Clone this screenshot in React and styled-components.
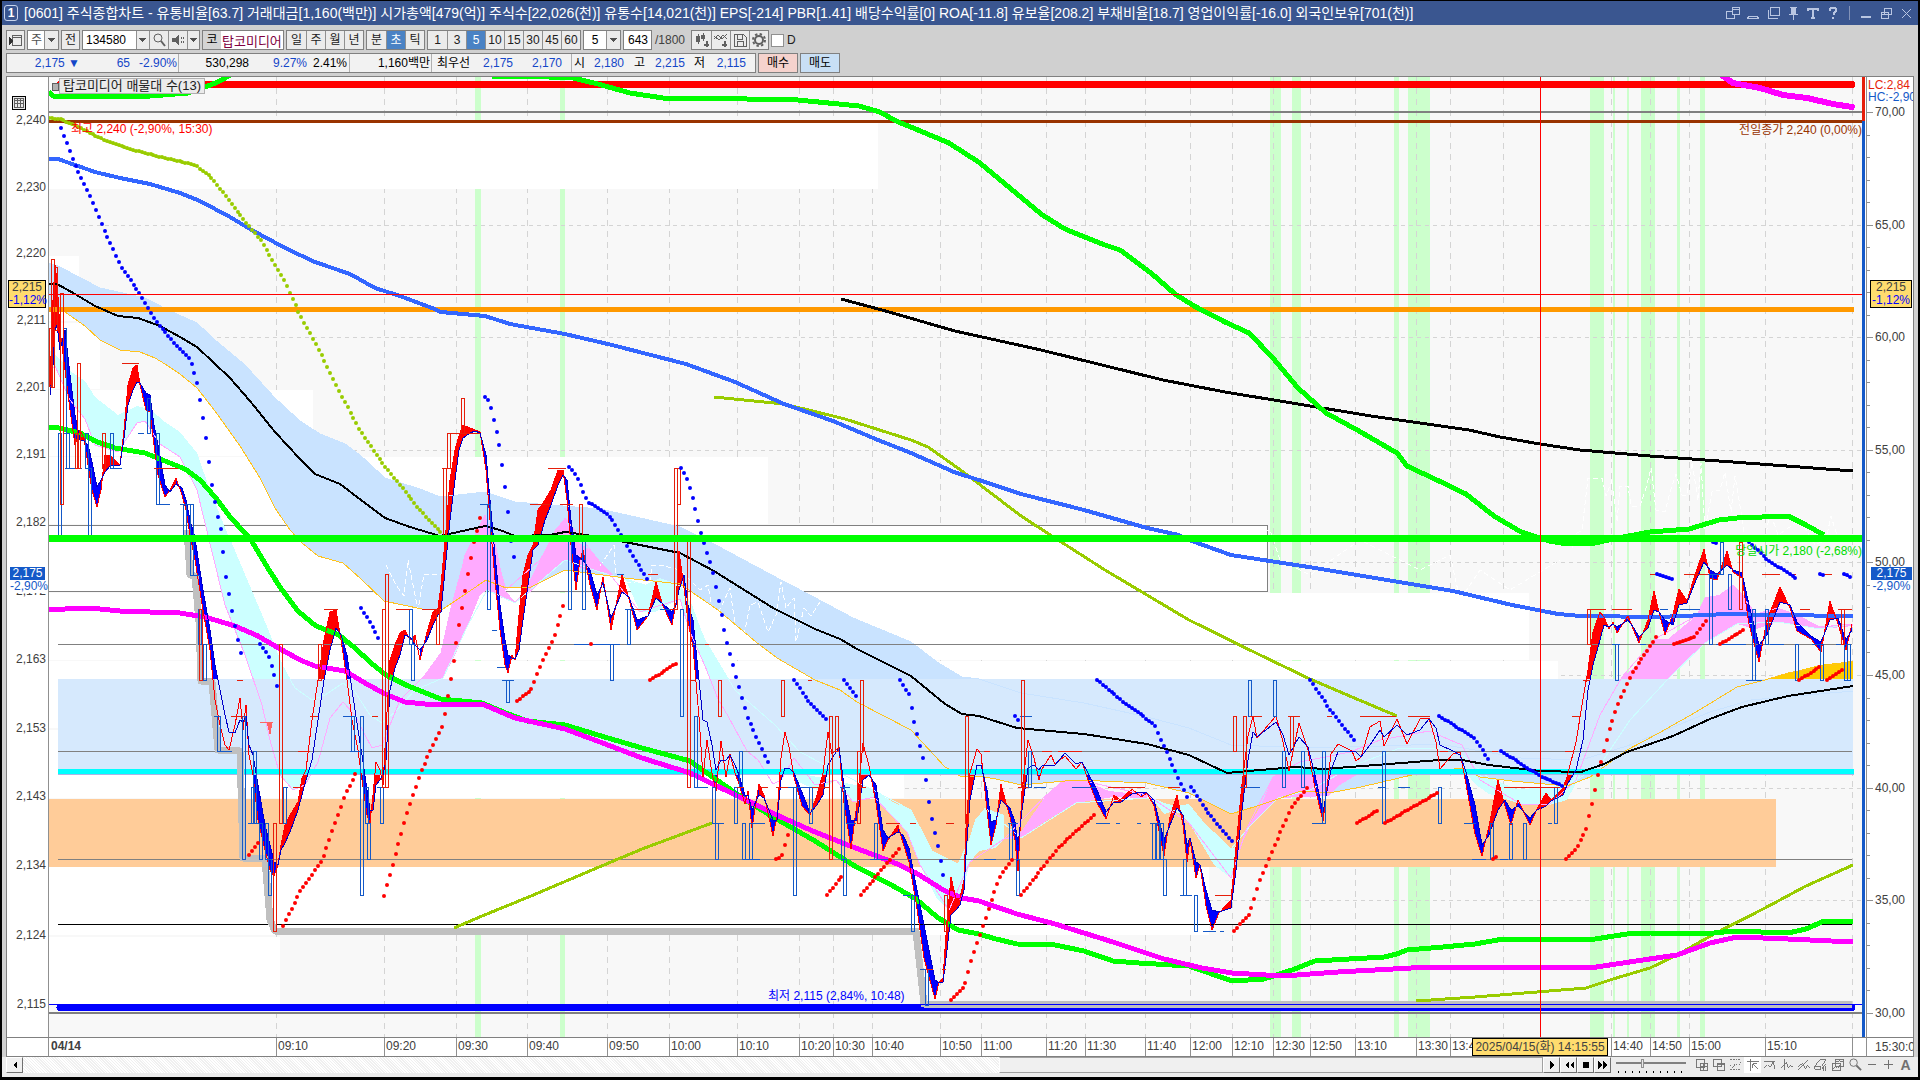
import React from "react";
import styled, {createGlobalStyle} from "styled-components";

const GlobalStyle = createGlobalStyle`
    * {
        box-sizing: border-box;
    }

    body {
        margin: 0;
        background: #000000;
        color: #000000;
        font-family: "Liberation Sans", "Noto Sans CJK KR", sans-serif;
        font-size: 12px;
        line-height: 16px;
    }

    button, input, select {
        font: inherit;
        color: inherit;
        margin: 0;
        padding: 0;
        border-radius: 0;
    }
`;

/* ---------- chart data (plot units) ---------- */

const PLOT = {x: 49, y: 77, w: 1817, h: 960};

const bands = [[475, 6], [560, 5], [1270, 11], [1292, 9], [1394, 5], [1408, 22], [1590, 14], [1613, 2], [1627, 2], [1641, 14], [1677, 3], [1700, 5]];

const gridX = [276, 384, 456, 527, 607, 669, 737, 799, 833, 872, 940, 981, 1046, 1085, 1145, 1190, 1232, 1273, 1310, 1355, 1416, 1450, 1503, 1611, 1650, 1689, 1765, 1852];
const gridY = [225, 337, 450, 562, 675, 788, 900];

// volume profile rows: x end, y start, y end
const profile = [[878, 123, 189], [79, 256, 321], [100, 323, 389], [313, 390, 456], [768, 457, 524], [1268, 525, 592], [1529, 593, 660], [1558, 661, 728], [904, 730, 798], [1209, 867, 935], [280, 937, 1004]];

const cloudTop = "49,263 58,266 100,288 145,298 170,311 197,323 215,340 245,365 275,398 300,421 320,434 345,444 360,455 385,478 420,489 440,497 485,492 515,502 550,505 600,509 640,518 680,527 714,544 781,580 810,595 853,618 911,642 937,662 962,677 979,679 1021,693 1084,703 1147,717 1189,728 1231,745 1315,748 1384,746 1439,744 1475,750 1521,758 1581,760 1627,746 1710,712 1751,700 1853,691";
const cloudBottom = "49,308 65,312 85,326 100,340 120,350 140,352 155,358 165,364 180,374 197,388 215,411 240,446 260,478 275,508 290,530 302,543 318,556 343,563 361,579 384,601 422,609 443,609 461,597 486,580 506,588 531,587 565,570 588,573 625,578 680,584 718,610 756,642 777,658 815,680 840,690 857,702 911,730 945,767 962,777 979,776 996,779 1021,785 1076,780 1147,783 1189,793 1231,814 1257,806 1269,802 1301,791 1329,793 1361,787 1416,774 1462,768 1480,777 1512,781 1567,786 1590,777 1627,750 1659,733 1696,712 1737,687 1765,680 1788,673 1853,661";

const cyanClouds = [
    "49,350 57,356 70,371 85,381 95,397 118,415 137,406 150,409 165,422 180,432 197,453 210,490 230,540 245,575 265,623 282,665 295,688 312,700 325,695 343,683 343,702 330,718 318,762 305,785 293,790 280,775 270,740 262,705 245,655 225,605 212,552 197,490 180,457 160,444 145,421 137,423 118,452 95,445 85,419 70,400 55,366 49,371",
    "625,578 645,585 660,578 680,585 692,605 705,640 720,665 735,690 735,740 718,699 705,666 690,632 680,599 655,612 640,612",
    "794,772 869,788 895,803 911,810 932,851 958,864 966,850 975,820 985,808 1004,815 1004,839 996,848 979,851 970,862 962,895 949,910 937,899 920,865 907,832 890,815 874,797 853,802 836,780 819,791 794,780",
    "1151,797 1164,803 1177,806 1189,804 1206,825 1231,849 1238,845 1236,866 1231,878 1214,865 1206,851 1189,823 1177,810 1164,814",
    "1462,768 1517,790 1567,786 1576,774 1583,770 1567,800 1549,805 1521,804 1489,794 1475,784",
];
const pinkClouds = [
    "395,705 410,690 425,675 440,655 450,610 465,555 478,530 485,515 495,540 505,590 515,602 525,590 540,560 555,530 565,518 575,540 590,550 600,562 615,577 600,572 580,568 565,560 550,573 530,592 515,603 500,597 487,590 480,595 468,625 455,655 443,678 415,700",
    "1004,839 1021,832 1046,795 1063,780 1084,781 1097,786 1109,791 1147,795 1147,798 1113,797 1076,803 1046,821 1021,838",
    "1236,857 1246,830 1260,807 1273,777 1285,770 1365,770 1338,786 1328,796 1278,798 1250,826",
    "1622,677 1636,666 1655,639 1668,639 1696,616 1705,597 1719,595 1733,585 1742,593 1756,614 1778,608 1797,614 1820,627 1853,624 1853,626 1820,629 1778,622 1756,629 1737,624 1705,643 1687,660 1668,679 1650,700 1600,760",
];
const cyanLine = "230,540 265,623 282,665 295,688 312,700 325,695 343,683 355,692 370,715 382,723 395,712 415,690 443,678 468,625 487,590 515,603 565,560 600,572 645,585 680,585 705,640 735,690 775,725 800,752 869,788 911,810 932,851 958,864 985,808 1021,838 1076,803 1147,798 1206,825 1231,849 1250,826 1278,798 1310,790 1355,765 1400,748 1439,748 1462,755 1489,778 1517,790 1567,786 1600,765 1630,720 1668,679 1705,643 1737,624 1778,622 1820,629 1853,624";
const pinkLine = "49,371 55,366 70,400 85,419 95,445 118,452 137,423 145,421 160,444 180,457 197,490 212,552 225,605 245,655 262,705 270,740 280,775 293,790 305,785 318,762 330,718 343,702 355,715 365,735 372,748 382,745 400,700 425,675 443,650 465,555 485,515 506,590 540,560 565,518 600,562 640,612 680,599 690,632 705,666 718,699 728,716 747,751 758,760 773,784 781,780 794,758 815,785 836,780 853,802 874,797 907,832 920,865 949,910 970,862 1004,839 1046,795 1084,781 1147,795 1189,823 1231,878 1246,830 1273,777 1300,762 1350,752 1380,740 1429,731 1462,745 1480,780 1521,804 1549,805 1576,780 1600,715 1622,677 1655,639 1696,616 1733,585 1756,614 1778,608 1820,627 1853,624";

const curves = [
    {c: "#c0c0c0", w: 7, p: "187,530 190,575 195,576 199,622 201,681 212,682 218,750 240,751 243,858 265,859 270,920 275,931 916,931 920,968 924,1004 1852,1004"},
    {c: "#000000", w: 2, p: "49,284 57,284 75,294 95,306 118,316 138,318 160,326 180,337 197,347 230,378 250,401 275,432 300,459 315,474 340,484 365,503 385,518 410,527 440,536 485,526 500,530 515,536 550,535 565,532 580,534 620,541 680,553 714,571 773,608 815,629 840,639 857,649 911,676 945,704 962,714 979,716 1017,728 1084,734 1147,744 1189,755 1227,773 1260,770 1296,767 1324,769 1402,763 1439,760 1462,760 1489,765 1540,771 1581,772 1604,764 1627,752 1673,736 1710,719 1742,707 1788,696 1853,686"},
    {c: "#000000", w: 3, p: "841,299 882,310 955,331 1041,350 1163,380 1225,392 1298,404 1371,416 1469,430 1500,437 1540,444 1580,450 1650,456 1733,462 1853,471"},
    {c: "#99cc00", w: 3, p: "714,397 784,404 845,419 911,440 928,447 962,471 1021,516 1055,538 1105,570 1189,620 1260,655 1310,679 1352,697 1397,716"},
    {c: "#99cc00", w: 3, p: "454,928 482,916 531,896 592,870 642,849 712,823"},
    {c: "#99cc00", w: 3, p: "1416,1001 1475,997 1586,988 1613,979 1650,968 1677,955 1714,934 1765,908 1806,886 1853,865"},
    {c: "#3366ff", w: 4, p: "49,159 58,159 95,172 120,178 150,184 180,193 200,201 230,217 250,229 285,248 315,262 350,274 375,288 400,296 432,308 441,312 485,316 510,324 565,334 612,345 686,364 735,382 784,404 833,421 878,440 911,453 954,472 991,484 1021,494 1084,510 1147,528 1179,535 1189,540 1231,555 1315,568 1453,591 1512,605 1558,614 1581,616 1659,617 1728,614 1774,615 1853,616"},
    {c: "#00ff00", w: 5, p: "49,92 53,96 150,96 188,93 205,87 218,82 230,75"},
    {c: "#00ff00", w: 5, p: "492,76 524,76 573,78 598,84 630,93 663,98 696,98 798,100 859,106 880,112 896,121 918,130 949,143 980,163 1016,193 1041,214 1065,229 1102,244 1120,250 1151,273 1175,294 1194,306 1225,322 1249,333 1273,358 1298,388 1326,413 1359,431 1397,453 1407,466 1439,481 1466,494 1494,516 1521,532 1549,541 1567,544 1595,543 1618,538 1650,532 1689,529 1719,520 1737,518 1788,516 1806,525 1824,535"},
    {c: "#00ff00", w: 5, p: "49,428 55,427 80,433 95,441 115,448 145,453 165,461 185,469 200,480 215,497 230,517 245,533 251,540 269,570 282,590 298,611 316,626 339,635 355,648 371,663 386,675 408,686 441,699 482,703 506,713 527,721 565,725 608,738 642,748 690,761 714,778 747,801 773,817 815,841 853,865 895,887 916,899 937,917 958,930 979,934 996,939 1017,944 1055,945 1084,951 1113,961 1139,963 1189,966 1232,981 1264,979 1292,970 1315,961 1384,957 1397,954 1407,950 1443,947 1475,944 1503,939 1595,939 1627,934 1650,933 1705,934 1733,931 1788,933 1806,929 1824,921 1853,921"},
    {c: "#ff00ff", w: 5, p: "49,610 65,609 90,608 120,611 180,613 205,617 235,626 258,636 275,646 300,660 315,666 345,671 365,683 385,694 405,702 425,704 482,704 515,718 565,729 600,742 642,758 690,773 752,803 781,817 815,832 853,847 895,863 916,873 945,891 962,898 979,901 1017,914 1055,924 1113,942 1164,959 1202,968 1232,973 1283,976 1338,972 1430,967 1512,967 1590,968 1636,961 1677,955 1710,943 1737,937 1788,939 1853,942"},
];

const blueRuns = [
    "61,128 75,165 90,196 105,232 122,268 140,294 155,320 175,344 190,359 197,381 202,410 207,445 211,480 216,510 221,531 226,575 232,611 238,640 243,663",
    "260,644 268,655 274,673 278,688",
    "361,608 370,622 381,643",
    "485,397 489,401 495,425 499,442 502,462 507,500 511,540 516,568",
    "569,467 576,475 588,502 600,509 611,518 619,531 632,555 648,580",
    "681,468 686,476 693,499 701,532 712,569 718,597 726,638 737,680 747,716 758,740 770,767",
    "794,680 810,703 826,719",
    "844,680 858,699",
    "900,680 909,695 916,729 923,756 930,810 937,843 945,883",
    "1015,716 1018,720",
    "1097,680 1126,704 1154,724 1164,747 1173,766 1187,797",
    "1191,787 1206,810 1233,843",
    "1310,680 1329,708 1355,742",
    "1439,716 1473,737 1490,761",
    "1501,751 1540,776 1563,786",
    "1657,574 1673,580",
    "1713,542 1717,544",
    "1749,542 1769,561 1796,578",
    "1820,574 1824,575",
    "1844,574 1850,577",
];

const redRuns = [
    "249,855 258,843",
    "283,926 300,892 322,860 335,824 345,795 358,769",
    "384,896 392,867 408,810 422,769 443,725 451,677 461,615 473,546 477,530 482,508",
    "517,701 531,690 543,660 553,640 566,598",
    "591,644 592,644",
    "650,680 677,663",
    "776,859 781,858 788,834",
    "827,895 842,876",
    "861,895 899,849",
    "951,1000 965,985 972,958 981,932 991,902 1000,877 1012,860",
    "1021,895 1059,847 1095,814",
    "1234,931 1250,913 1260,880 1276,842 1292,807 1308,786",
    "1357,823 1380,809",
    "1385,823 1439,792",
    "1493,859 1498,855",
    "1566,859 1576,849 1586,830 1593,800 1600,765 1609,731 1618,704 1632,673 1645,654 1656,637",
    "1674,644 1694,637 1706,621",
    "1720,644 1745,629",
    "1799,680 1820,667",
    "1827,680 1842,670",
];

const oliveRun = "49,118 60,119 75,125 100,138 130,149 160,157 195,165 210,176 225,195 240,215 262,242 283,278 300,315 320,352 340,393 360,430 380,460 400,485 420,510 441,533";

// x, fast average, slow average
const averages = "50,385,395 53,300,365 55,265,330 57,280,325 60,330,350 65,370,330 70,410,375 75,445,415 80,430,440 84,438,441 88,465,445 92,490,462 97,507,487 101,490,480 105,455,472 110,455,466 120,465,465 124,430,438 128,385,405 133,368,390 137,365,382 140,385,383 146,410,393 150,412,395 154,445,425 158,475,445 165,497,485 170,490,492 176,478,484 182,495,488 186,510,500 190,535,520 195,560,538 203,610,590 210,650,630 215,700,665 220,725,690 225,745,715 229,750,732 235,725,733 240,698,720 243,730,722 246,705,716 249,755,745 253,775,755 258,820,785 265,850,825 270,870,845 274,876,862 278,865,865 281,845,850 285,825,843 290,815,832 298,802,810 302,778,795 306,770,780 312,720,760 318,680,720 324,640,680 330,612,650 336,610,628 341,640,635 347,680,655 352,720,690 358,750,730 362,780,755 367,815,790 370,823,810 373,795,810 376,762,785 380,770,780 383,785,775 386,730,760 390,660,690 395,645,668 400,633,655 405,630,635 410,640,637 415,635,645 420,660,650 427,632,640 433,612,625 438,608,615 441,585,612 446,530,560 450,480,520 455,450,480 459,436,450 463,425,438 470,428,433 475,430,431 480,432,433 486,470,455 490,520,500 495,580,555 500,630,605 505,665,640 508,673,655 512,655,658 515,660,659 519,615,650 523,575,620 528,555,585 533,545,550 538,510,545 545,500,520 551,490,505 558,470,485 563,470,475 567,500,480 571,545,520 576,590,555 580,560,558 583,550,560 590,585,570 597,610,595 603,577,583 611,630,618 622,575,592 629,599,597 637,630,620 648,616,616 656,582,598 663,606,604 672,625,612 676,603,605 679,551,590 684,588,575 688,621,605 693,647,620 699,717,680 703,777,720 707,740,722 712,773,745 716,791,770 721,741,760 726,777,760 730,754,755 735,773,765 739,784,775 745,804,795 748,791,795 752,828,810 759,784,795 764,795,798 773,836,820 777,817,820 781,758,780 785,732,768 789,747,768 794,777,773 802,806,792 810,815,813 817,795,805 823,773,795 828,732,765 832,754,758 839,747,748 844,803,785 851,849,820 857,803,820 863,743,780 869,766,775 876,803,785 883,851,830 888,840,838 898,825,832 903,843,835 909,862,848 916,902,885 924,958,925 935,999,980 939,982,983 943,978,982 947,921,950 951,877,915 956,899,910 960,898,905 964,880,890 966,828,855 970,773,800 977,749,765 981,754,765 987,810,790 991,845,822 996,825,820 1001,784,800 1006,803,805 1010,817,808 1015,840,822 1018,871,845 1022,791,810 1028,740,768 1034,758,765 1039,780,770 1042,769,766 1051,755,765 1055,764,765 1065,756,753 1076,769,764 1082,762,762 1088,780,773 1097,803,790 1106,819,812 1114,795,802 1120,800,803 1132,789,794 1141,797,792 1147,793,793 1154,806,800 1164,856,840 1170,817,825 1177,795,808 1183,825,815 1187,862,845 1190,840,838 1196,878,862 1200,865,865 1206,906,890 1212,930,910 1219,913,912 1231,900,908 1236,847,870 1242,784,810 1248,736,760 1253,716,732 1257,738,737 1276,716,722 1283,742,735 1289,771,755 1299,723,737 1308,750,747 1315,788,775 1323,821,812 1331,754,770 1338,744,752 1352,751,751 1356,761,752 1361,757,757 1370,727,745 1380,721,730 1384,746,737 1397,719,725 1407,744,735 1420,719,730 1429,718,719 1436,742,728 1440,769,745 1453,754,751 1460,752,755 1466,784,772 1475,834,805 1482,856,845 1489,826,835 1498,780,810 1505,806,800 1511,825,810 1518,800,806 1530,825,818 1537,809,810 1546,793,806 1551,800,801 1563,788,795 1567,777,785 1576,742,770 1583,699,740 1588,670,690 1593,632,665 1600,612,640 1604,617,625 1609,629,627 1613,622,624 1617,633,627 1628,616,620 1634,631,628 1639,643,637 1648,620,628 1654,591,610 1659,612,612 1665,635,620 1673,614,625 1679,589,605 1687,601,603 1694,578,585 1704,549,562 1710,578,570 1717,580,574 1727,551,565 1733,572,570 1742,578,573 1749,624,605 1759,662,645 1767,620,635 1780,587,602 1790,608,605 1797,631,622 1811,639,636 1821,652,642 1830,601,620 1838,624,618 1846,650,640 1852,624,630"
    .split(" ").map(row => row.split(",").map(Number));

// x, top, bottom
const fallCandles = [[64, 328, 433], [67, 433, 468], [59, 433, 539], [86, 433, 468], [89, 468, 539], [111, 433, 468], [148, 398, 433], [157, 433, 504], [184, 504, 539], [191, 504, 575], [199, 609, 644], [204, 644, 680], [218, 716, 751], [243, 716, 859], [252, 787, 823], [254, 751, 823], [260, 823, 859], [266, 823, 859], [269, 859, 895], [284, 787, 823], [352, 716, 751], [361, 716, 895], [366, 787, 823], [368, 823, 859], [381, 787, 823], [410, 609, 644], [412, 644, 680], [488, 504, 609], [507, 680, 702], [569, 540, 609], [583, 540, 609], [611, 644, 680], [628, 609, 644], [681, 609, 716], [695, 716, 787], [713, 787, 823], [716, 823, 859], [735, 787, 823], [740, 751, 787], [743, 823, 859], [750, 823, 859], [794, 787, 895], [810, 787, 823], [842, 787, 859], [844, 859, 895], [875, 823, 859], [912, 895, 931], [926, 969, 1005], [1010, 823, 859], [1017, 859, 895], [1029, 751, 787], [1153, 823, 859], [1157, 823, 859], [1161, 823, 859], [1164, 859, 895], [1184, 859, 895], [1195, 895, 931], [1249, 680, 716], [1274, 680, 716], [1283, 751, 787], [1302, 751, 787], [1323, 751, 823], [1383, 751, 823], [1439, 787, 823], [1491, 823, 859], [1510, 823, 859], [1524, 823, 859], [1555, 787, 823], [1616, 644, 680], [1710, 574, 644], [1721, 542, 574], [1729, 574, 609], [1753, 609, 680], [1766, 609, 644], [1796, 644, 680], [1821, 644, 680], [1845, 644, 680], [1848, 644, 680]];
const riseCandles = [[52, 259, 387], [50, 328, 386], [55, 267, 330], [61, 293, 504], [78, 363, 468], [76, 433, 468], [103, 433, 468], [200, 609, 680], [274, 823, 931], [280, 644, 823], [319, 644, 680], [383, 609, 787], [386, 574, 787], [437, 609, 644], [444, 468, 540], [448, 433, 468], [462, 398, 433], [580, 504, 540], [675, 468, 609], [678, 468, 504], [688, 540, 787], [719, 680, 716], [782, 680, 716], [830, 716, 859], [836, 716, 751], [858, 751, 823], [861, 680, 751], [945, 895, 931], [966, 716, 823], [1022, 680, 787], [1234, 716, 751], [1244, 716, 787], [1291, 716, 751], [1588, 609, 644], [1740, 542, 609], [1842, 609, 644]];

// x start, x end, y
const fallTicks = [[65, 82, 468], [110, 122, 468], [158, 170, 504], [180, 190, 504], [190, 200, 575], [138, 144, 433], [214, 220, 716], [218, 232, 751], [248, 262, 823], [282, 288, 787], [343, 356, 716], [350, 362, 751], [377, 384, 787], [465, 478, 433], [480, 488, 504], [497, 505, 667], [502, 514, 680], [492, 497, 630], [574, 620, 644], [600, 614, 644], [617, 624, 574], [625, 638, 609], [660, 672, 609], [695, 708, 787], [712, 724, 823], [745, 760, 859], [752, 765, 823], [788, 812, 787], [840, 850, 787], [846, 856, 823], [870, 890, 859], [903, 910, 895], [920, 926, 969], [984, 996, 859], [1008, 1018, 823], [1020, 1032, 716], [1034, 1046, 787], [1072, 1096, 787], [1096, 1110, 823], [1116, 1120, 823], [1137, 1141, 823], [1150, 1162, 823], [1180, 1192, 895], [1203, 1216, 931], [1220, 1224, 931], [1240, 1260, 787], [1312, 1324, 823], [1338, 1350, 751], [1378, 1386, 787], [1398, 1410, 787], [1464, 1476, 823], [1472, 1486, 859], [1500, 1508, 859], [1548, 1552, 823], [1612, 1620, 644], [1640, 1646, 644], [1708, 1722, 574], [1660, 1668, 609], [1680, 1700, 609], [1746, 1762, 680], [1716, 1746, 644], [1770, 1784, 644], [1812, 1820, 644], [1836, 1850, 644]];
const riseTicks = [[122, 139, 363], [154, 178, 468], [324, 338, 609], [310, 318, 716], [298, 310, 751], [293, 300, 787], [237, 243, 680], [231, 243, 716], [372, 378, 716], [396, 410, 609], [422, 440, 609], [442, 450, 468], [450, 480, 433], [530, 550, 504], [548, 566, 468], [560, 573, 504], [635, 650, 609], [648, 658, 574], [670, 676, 609], [690, 696, 680], [705, 709, 644], [737, 744, 787], [760, 768, 787], [776, 788, 787], [812, 830, 787], [808, 812, 680], [858, 866, 787], [886, 900, 823], [910, 916, 823], [926, 933, 969], [942, 946, 969], [946, 954, 823], [984, 990, 751], [1018, 1028, 787], [1042, 1052, 751], [1058, 1082, 751], [1108, 1145, 787], [1168, 1180, 787], [1215, 1232, 895], [1250, 1262, 716], [1288, 1300, 716], [1327, 1332, 716], [1360, 1396, 716], [1408, 1430, 716], [1440, 1448, 751], [1492, 1498, 751], [1504, 1560, 787], [1565, 1574, 751], [1572, 1581, 716], [1583, 1590, 680], [1590, 1606, 609], [1612, 1632, 609], [1650, 1656, 574], [1684, 1708, 574], [1762, 1780, 574], [1790, 1796, 574], [1824, 1832, 574], [1800, 1810, 609], [1838, 1852, 609]];

const whiteTraces = [
    "1572,548 1574,535 1582,530 1588,478 1602,478 1606,496 1612,480 1617,522 1620,486 1628,486 1631,506 1640,506 1646,488 1651,468 1656,510 1665,512 1670,492 1676,474 1682,495 1687,495 1692,462 1698,500 1701,463 1705,530 1712,492 1720,490 1725,472 1731,512 1735,476 1741,512 1745,540 1765,540 1770,512 1778,535 1800,520 1815,545 1826,540 1831,516 1840,545",
    "600,566 614,545 616,582 632,582 650,582 652,565 660,565 680,570 700,590 708,585 714,620 722,605 730,588 736,632 742,645 750,605 758,602 768,632 776,615 781,582 786,608 794,598 796,642 804,608 811,616 820,602",
    "386,565 396,585 404,596 408,560 418,610 424,574 441,574",
    "1200,530 1270,530 1280,560 1310,575 1360,540 1420,570 1450,555 1460,600 1480,570 1510,590 1560,560",
];

const toPoints = s => s.split(" ").map(pair => pair.split(",").map(Number));

// one dot per bar along the run
const dots = run => {
    const pts = toPoints(run);
    let d = "";
    let i = 0;
    for (let x = pts[0][0]; x <= pts[pts.length - 1][0]; x += 2.9) {
        while (i < pts.length - 2 && x > pts[i + 1][0]) i++;
        const [x0, y0] = pts[i];
        const [x1, y1] = pts[i + 1];
        const y = y0 + (y1 - y0) * (x - x0) / (x1 - x0);
        d += `M${Math.round(x)} ${Math.round(y)}h0`;
    }
    return d;
};

const fills = sign => averages.slice(1).map((b, i) => {
    const a = averages[i];
    if (((b[1] + a[1]) - (b[2] + a[2])) * sign <= 0) return "";
    return `M${a[0]} ${a[1]}L${b[0]} ${b[1]}L${b[0]} ${b[2]}L${a[0]} ${a[2]}Z`;
}).join("");

const candlePath = list => list.map(([x, t, b]) => `M${x - 1} ${t}h3v${b - t}h-3z`).join("");
const tickPath = list => list.map(([a, b, y]) => `M${a} ${y}H${b}`).join("");
const averageLine = n => averages.map(a => `${a[0]},${a[n]}`).join(" ");

/* ---------- window ---------- */

const Window = styled.main`
    display: flex;
    flex-direction: column;
    height: calc(100vh - 4px);
    margin: 1px 2px 3px;
    background: #d0d0d0;
    overflow: hidden;
`;

const TitleBar = styled.header`
    display: flex;
    align-items: center;
    gap: 6px;
    height: 24px;
    flex: none;
    padding: 0 5px 0 2px;
    background: #3a5690;
    color: #ffffff;
`;

const WindowNo = styled.span`
    width: 14px;
    height: 16px;
    border: 1px solid #c8d4ec;
    border-radius: 3px;
    font-weight: 700;
    line-height: 14px;
    text-align: center;
`;

const Title = styled.h1`
    flex: 1;
    min-width: 0;
    margin: 0;
    font-size: 14px;
    font-weight: 400;
    line-height: 20px;
    white-space: nowrap;
    overflow: hidden;
`;

const TitleButtons = styled.div`
    display: flex;
    align-items: center;
    gap: 6px;
    color: #b9c6e2;
`;

const TitleButton = styled.button`
    width: 14px;
    height: 16px;
    border: 0;
    background: none;
`;

const TitleDivider = styled.span`
    width: 1px;
    height: 14px;
    margin: 0 3px;
    background: #8393b8;
`;

const Glyph = styled.svg`
    display: block;
    width: ${({$w}) => $w || 14}px;
    height: ${({$h}) => $h || 14}px;
    margin: auto;
    fill: none;
    stroke: currentColor;
    shape-rendering: ${({$smooth}) => ($smooth ? "auto" : "crispEdges")};
`;

const Toolbar = styled.div`
    display: flex;
    flex: none;
    gap: 2px;
    height: 20px;
    margin: ${({$top}) => $top}px 4px 0;
    white-space: nowrap;
`;

const Group = styled.div`
    display: flex;
    border: 1px solid #808080;
    background: #ebebeb;
`;

const ToolButton = styled.button`
    width: ${({$w}) => $w || 19}px;
    border: 0;
    border-left: ${({$first}) => ($first ? 0 : 1)}px solid #909090;
    background: ${({$on}) => ($on ? "#4a82c4" : "#ebebeb")};
    color: ${({$on}) => ($on ? "#ffffff" : "#202020")};
    line-height: 17px;
    text-align: center;

    svg {
        color: #606060;
    }
`;

const Field = styled.input`
    width: ${({$w}) => $w}px;
    height: 18px;
    padding: 0 3px;
    border: 0;
    background: #ffffff;
    color: ${({$c}) => $c || "#000000"};
    text-align: ${({$align}) => $align || "left"};
    border-radius: 0;
`;

const NameField = styled(Field)`
    padding: 0 1px;
    font-size: 13px;
`;

const Combo = styled.select`
    width: ${({$w}) => $w}px;
    height: 18px;
    padding-left: 3px;
    border: 0;
    appearance: none;
    color: #505050;
    background: #ffffff;
`;

const Market = styled.span`
    width: 18px;
    background: #d4d4d4;
    line-height: 18px;
    text-align: center;
`;

const Total = styled.span`
    width: 35px;
    padding-left: 1px;
    color: #404040;
    line-height: 20px;
`;

const Check = styled.label`
    display: flex;
    align-items: center;
    gap: 3px;
    color: #202020;

    input {
        width: 13px;
        height: 13px;
        appearance: none;
        background: #ffffff;
        border: 1px solid #909090;
    }
`;

const Quote = styled.div`
    display: flex;
    border: 1px solid #808080;
    background: #f2f2f2;
    line-height: 18px;
`;

const QuoteCell = styled.span`
    width: ${({$w}) => $w}px;
    padding-right: ${({$pad}) => $pad || 0}px;
    border-right: ${({$line}) => ($line ? 1 : 0)}px solid #b0b0b0;
    color: ${({$c}) => $c || "#000000"};
    text-align: right;
`;

const OrderButton = styled.button`
    width: 40px;
    border: 1px solid #808080;
    background: ${({$bg}) => $bg};
    line-height: 17px;
`;

/* ---------- chart panel ---------- */

const Panel = styled.section`
    display: grid;
    flex: 1;
    min-height: 0;
    grid-template-columns: 42px 1fr 47px;
    grid-template-rows: minmax(0, 1fr) 20px;
    margin: 3px 4px 0;
    border: 1px solid #808080;
    border-bottom: 0;
    background: #ffffff;
`;

const Axis = styled.div`
    position: relative;
    display: flex;
    flex-direction: column;
    min-width: 0;
    overflow: hidden;
    border-${({$side}) => $side}: 1px solid #909090;
    color: #404040;
`;

const AxisStep = styled.div`
    flex: ${({$size}) => $size} 0 0;
    line-height: 0;
    padding: 0 2px;
    text-align: right;
`;

const RateStep = styled(AxisStep)`
    padding: 0 0 0 8px;
    text-align: left;
    background: linear-gradient(#909090, #909090) 0 0 / 6px 1px no-repeat,
        ${({$last}) => ($last ? "none" : "repeating-linear-gradient(#909090 0 1px, transparent 1px 20%) 0 0 / 3px 100% no-repeat")};
`;

const TableIcon = styled.button`
    position: absolute;
    left: 5px;
    top: 19px;
    width: 14px;
    height: 14px;
    border: 1px solid #000000;
    background: #e8e8e8;
    color: #606060;
`;

const PriceTag = styled.div.attrs(({$y}) => ({style: {top: `${($y - PLOT.y) / PLOT.h * 100}%`}}))`
    position: absolute;
    left: ${({$left}) => $left}px;
    width: ${({$w}) => $w}px;
    border: ${({$now}) => ($now ? 0 : 1)}px solid #000000;
    background: ${({$now}) => ($now ? "#ffffff" : "#ffdc6e")};
    color: ${({$now}) => ($now ? "#1459c8" : "#0000ff")};
    line-height: 13px;
    text-align: center;
    white-space: nowrap;

    b {
        display: block;
        font-weight: 400;
        background: ${({$now}) => ($now ? "#1459c8" : "none")};
        color: ${({$now}) => ($now ? "#ffffff" : "#404040")};
    }
`;

const RangeNote = styled.div`
    position: absolute;
    top: ${({$top}) => $top}px;
    left: 1px;
    color: ${({$c}) => $c};
    line-height: 12px;
    white-space: nowrap;
`;

const Plot = styled.div`
    position: relative;
    min-width: 0;
    overflow: hidden;
`;

const PlotSvg = styled.svg`
    display: block;
    width: 100%;
    height: 100%;
    background: #f8f8f8;
    shape-rendering: crispEdges;
`;

const Dots = styled.path`
    stroke-width: 4px;
    stroke-linecap: round;
    shape-rendering: auto;
`;

const Note = styled.div.attrs(({$x, $y, $right}) => ({
    style: {
        top: `${($y - PLOT.y) / PLOT.h * 100}%`,
        ...($right ? {right: 4} : {left: `${($x - PLOT.x) / PLOT.w * 100}%`}),
    },
}))`
    position: absolute;
    color: ${({$c}) => $c};
    line-height: 14px;
    white-space: nowrap;
`;

const Legend = styled(Note)`
    padding: 0 3px;
    border: 1px solid #b0b0b0;
    background: #ebebeb;
    line-height: 14px;
    font-size: 13px;

    &::before {
        content: "";
        position: absolute;
        left: -8px;
        top: 4px;
        width: 5px;
        height: 6px;
        border: 1px solid #606060;
        background: #b0b0b0;
    }
`;

const TimeRow = styled.div`
    position: relative;
    display: flex;
    min-width: 0;
    border-top: 1px solid #808080;
    border-bottom: 1px solid #808080;
    line-height: 17px;
    color: #404040;
`;

const TimeCell = styled.div`
    flex: ${({$size}) => $size} 0 0;
    min-width: 0;
    text-indent: 2px;
    box-shadow: ${({$first}) => ($first ? "none" : "inset 1px 0 #909090")};
    font-weight: ${({$first}) => ($first ? 700 : 400)};
    overflow: hidden;
    white-space: nowrap;
`;

const Corner = styled.div`
    border-top: 1px solid #808080;
    border-bottom: 1px solid #808080;
    border-${({$side}) => $side}: 1px solid #909090;
    padding-left: 8px;
    color: #404040;
    line-height: 18px;
    overflow: hidden;
    white-space: nowrap;
`;

const DateTag = styled.div.attrs(() => ({style: {left: `${(1472 - PLOT.x) / PLOT.w * 100}%`}}))`
    position: absolute;
    top: 0;
    width: 136px;
    height: 18px;
    border: 1px solid #000000;
    background: #ffdc6e;
    line-height: 16px;
    text-align: center;
    white-space: nowrap;
`;

/* ---------- bottom bar ---------- */

const BottomBar = styled.footer`
    display: flex;
    flex: none;
    height: 20px;
    padding: 0 4px 4px;
    background: #ececec;
`;

const Track = styled.div`
    display: flex;
    flex: 1;
    background: repeating-linear-gradient(45deg, #ffffff 0 1px, #f0f0f0 1px 2px);

    &::before {
        content: "";
        flex: 978 0 0;
    }

    &::after {
        content: "";
        flex: 543 0 0;
        border: 1px solid #a0a0a0;
        border-left-color: #ffffff;
        background: #f0f0f0;
    }
`;

const ScrollButton = styled.button`
    width: 17px;
    border: 1px solid #ffffff;
    border-right-color: #707070;
    border-bottom-color: #707070;
    background: #f0f0f0;
`;

const Speed = styled.div`
    width: 70px;
    margin: 0 7px 0 5px;
    padding-top: 2px;
    background: repeating-linear-gradient(90deg, #000000 0 1px, transparent 1px 7px) 2px 14px / 100% 2px no-repeat;

    input {
        display: block;
        width: 100%;
        height: 8px;
        appearance: none;
        background: linear-gradient(#808080, #808080) 0 3px / 100% 2px no-repeat;
    }

    input::-webkit-slider-thumb {
        appearance: none;
        width: 3px;
        height: 9px;
        background: #e8e8e8;
        border: 1px solid #909090;
    }
`;

const ChartTool = styled.button`
    width: 17px;
    border: 0;
    background: ${({$on}) => ($on ? "#ffffff" : "none")};
    color: #707070;
    font-size: 14px;
    line-height: 16px;
`;

const Arrow = () => <Glyph $w={8} $h={5} viewBox="0 0 8 5"><path d="M0 0h7L3.500 4z" fill="#505050" stroke="none"/></Glyph>;

const priceSteps = [["", 43], ["2,240", 67], ["2,230", 66], ["2,220", 67], ["2,211", 67], ["2,201", 67], ["2,191", 68], ["2,182", 69], ["2,172", 68], ["2,163", 69], ["2,153", 68], ["2,143", 69], ["2,134", 70], ["2,124", 69], ["2,115", 33]];
const rateSteps = ["70,00", "65,00", "60,00", "55,00", "50,00", "45,00", "40,00", "35,00"];
const timeCells = [["04/14", 227], ["09:10", 108], ["09:20", 72], ["09:30", 71], ["09:40", 80], ["09:50", 62], ["10:00", 68], ["10:10", 62], ["10:20", 34], ["10:30", 39], ["10:40", 68], ["10:50", 41], ["11:00", 65], ["11:20", 39], ["11:30", 60], ["11:40", 45], ["12:00", 42], ["12:10", 41], ["12:30", 37], ["12:50", 45], ["13:10", 61], ["13:30", 34], ["13:40", 161], ["14:40", 39], ["14:50", 39], ["15:00", 76], ["15:10", 87], ["", 14]];

const titleIcons = [
    ["새 창", <path key="a" d="M6.500 1.500h7v7h-7zM6 5.500H.500v7h8V9M6 3.500h8"/>],
    ["내리기", <path key="a" d="M2.500 10.500h9l1 2h-11z"/>],
    ["복사", <path key="a" d="M4.500 1.500h9v8h-9zM2.500 4v8.500h9"/>],
    ["고정", <path key="a" d="M3.500 1.500h7M5 2h4v6H5zM2.500 8.500h9M7 9v5" fill="currentColor"/>],
    ["글꼴", <path key="a" d="M2 2.500h10M7 2v10M5 12h4M2 2v3M12 2v3" strokeWidth="2"/>],
    ["도움말", <path key="a" d="M4 5V3l2-1.500h2L10 3v2L7.500 7v2M7 11v2" strokeWidth="2"/>],
];

const chartIcons = [
    ["창 추가", <path key="a" d="M1.500 1.500h9v9h-9zM5.500 5.500h8v8h-8zM9.500 6v7M6 9.500h7"/>],
    ["창 복사", <path key="a" d="M1.500 1.500h9v8h-9zM5.500 5.500h8v8h-8zM5 7h9" fill="#ececec"/>],
    ["영역", <path key="a" d="M1 1.500h12M1 12.500h12M1 8l3 2 3-4 3 2 3-4" strokeDasharray="2 1"/>],
    ["십자선", <path key="a" d="M1 3.500h13M4.500 1v13M7 6l6 6M7 6v5M7 6h5"/>],
    ["고가", <path key="a" d="M1 3.500h12M1 11l4-4 3 3 3-6 2 8"/>],
    ["추세", <path key="a" d="M4.500 1v12M1 11l3-3 3-3 2 6 2-3 3 2"/>],
    ["각도", <path key="a" d="M1 13L12 2M1 9l5-3 3 6 2-4 3 3"/>],
    ["지우기", <path key="a" d="M1 9l5-7h7l-5 7zM1 9v3h6V9M8 12l5-6M10 9v5M12 9v5"/>],
    ["저장", <path key="a" d="M4.500 1.500h9v8h-9zM1.500 5.500h9v8h-9zM2 12l3-3 2 2 3-4M5 4l4-1 4 1"/>],
    ["확대경", <g key="a"><circle cx="6" cy="5" r="4"/><path d="M9 8l5 5" strokeWidth="2"/></g>],
    ["축소", <path key="a" d="M3 7h9" strokeWidth="2"/>],
    ["확대", <path key="a" d="M2 7h10M7 2v10" strokeWidth="2"/>],
];

const PriceChart = () => (
    <PlotSvg viewBox={`${PLOT.x} ${PLOT.y} ${PLOT.w} ${PLOT.h}`} preserveAspectRatio="none" role="img" aria-label="탑코미디어 초봉 차트" fill="none">
        {bands.map(([x, w]) => <rect key={x} x={x} y="77" width={w} height="960" fill="#ccffcc"/>)}
        <path d={gridX.map(x => `M${x}.500 77V1037`).join("")} stroke="#d4d4d4" strokeDasharray="6 5"/>
        <path d={gridY.map(y => `M49 ${y}.500H1862`).join("")} stroke="#d4d4d4" strokeDasharray="4 4"/>
        {profile.map(([x, y0, y1]) => <rect key={y0} x="49" y={y0} width={x - 49} height={y1 - y0} fill="#ffffff"/>)}
        <rect x="30" y="525.500" width="1237" height="66" stroke="#808080"/>
        <rect x="49" y="799" width="1727" height="68" fill="#ffcc99"/>

        <polygon points={`${cloudTop} ${cloudBottom.split(" ").reverse().join(" ")}`} fill="#c9e3ff"/>
        <polygon points="1765,680 1788,673 1820,665 1853,661 1853,680" fill="#ffcc00"/>
        {cyanClouds.map(p => <polygon key={p} points={p} fill="#ccffff"/>)}
        {pinkClouds.map(p => <polygon key={p} points={p} fill="#ffaaff"/>)}
        {whiteTraces.map(p => <polyline key={p} points={p} stroke="#ffffff" strokeDasharray="5 3"/>)}
        <path d={fills(-1)} fill="#ff0000"/>
        <path d={fills(1)} fill="#0000ff"/>

        <rect x="58" y="679" width="1795" height="95" fill="#d6e9fd"/>
        <polyline points={cloudTop} stroke="#c9e3ff"/>
        <polyline points={cyanLine} stroke="#ccffff"/>
        <polyline points={pinkLine} stroke="#ffaaff"/>
        <polyline points={cloudBottom} stroke="#ffc31e"/>
        <path d="M58 644.500H1852M58 751.500H1852M58 859.500H1852" stroke="#808080"/>
        <path d="M58 924.500H1852" stroke="#000000"/>
        <path d="M49 112H1862M49 1013H1862" stroke="#808080" strokeWidth="2"/>
        <path d="M58 771H1854" stroke="#00ffff" strokeWidth="5"/>
        <path d="M58 774H1854" stroke="#aab4e6"/>
        <path d="M60 84.500H1852" stroke="#ff0000" strokeWidth="7" strokeLinecap="round"/>
        <path d="M49 121.500H1862" stroke="#993300" strokeWidth="3"/>
        <path d="M49 309.500H1854" stroke="#ff9900" strokeWidth="5"/>
        <path d="M60 1007.500H1852" stroke="#0000ff" strokeWidth="7" strokeLinecap="round"/>

        {curves.slice(0, 7).map(c => <polyline key={c.p} points={c.p} stroke={c.c} strokeWidth={c.w} strokeLinejoin="round"/>)}
        <path d="M49 1004.500H1862" stroke="#0000ff"/>
        <Dots d={dots(oliveRun)} stroke="#99cc00"/>
        {curves.slice(7).map(c => <polyline key={c.p} points={c.p} stroke={c.c} strokeWidth={c.w} strokeLinejoin="round"/>)}
        <polyline points="1723,76 1733,83 1760,88 1783,95 1807,98 1833,104 1852,107" stroke="#ff00ff" strokeWidth="6" strokeLinecap="round"/>

        <polyline points={averageLine(1)} stroke="#ff0000"/>
        <polyline points={averageLine(2)} stroke="#0000c8"/>
        <path d={candlePath(fallCandles)} stroke="#1459c8"/>
        <path d={tickPath(fallTicks)} stroke="#1459c8"/>
        <path d={candlePath(riseCandles)} stroke="#e61e0a"/>
        <path d={tickPath(riseTicks)} stroke="#e61e0a"/>
        <Dots d={blueRuns.map(dots).join("")} stroke="#0000ff"/>
        <Dots d={redRuns.map(dots).join("")} stroke="#ff0000"/>
        <path d="M260 722h13M267 722h5l-2 12z" fill="#ff6464" stroke="#ff6464"/>
        <path d="M49 538.500H1862" stroke="#00ff00" strokeWidth="7"/>

        <path d="M49 294.500H1862M1540.500 77V1037" stroke="#ff0000"/>
        <path d="M1863.500 77V121" stroke="#e61e0a" strokeWidth="3"/>
        <path d="M1863.500 121V1037" stroke="#1459c8" strokeWidth="3"/>
        <path d="M1865.500 77V1037" stroke="#ffffff"/>
    </PlotSvg>
);

const App = () => (
    <Window>
        <GlobalStyle/>
        <TitleBar>
            <WindowNo>1</WindowNo>
            <Title>[0601] 주식종합차트 - 유통비율[63.7] 거래대금[1,160(백만)] 시가총액[479(억)] 주식수[22,026(천)] 유통수[14,021(천)] EPS[-214] PBR[1.41] 배당수익률[0] ROA[-11.8] 유보율[208.2] 부채비율[18.7] 영업이익률[-16.0] 외국인보유[701(천)]</Title>
            <TitleButtons>
                {titleIcons.map(([name, icon]) => (
                    <TitleButton key={name} aria-label={name}><Glyph viewBox="0 0 14 14">{icon}</Glyph></TitleButton>
                ))}
                <TitleDivider/>
                <TitleButton aria-label="최소화"><Glyph viewBox="0 0 14 14"><path d="M2 11h10" strokeWidth="2"/></Glyph></TitleButton>
                <TitleButton aria-label="이전 크기"><Glyph viewBox="0 0 14 14"><path d="M5.500 2.500h7v6h-7zM2.500 6.500h7v6h-7zM2 8h8"/></Glyph></TitleButton>
                <TitleButton aria-label="닫기"><Glyph viewBox="0 0 14 14"><path d="M3 3l9 9M12 3l-9 9"/></Glyph></TitleButton>
            </TitleButtons>
        </TitleBar>

        <Toolbar $top={5}>
            <Group>
                <ToolButton $first $w={17} aria-label="목록 열기"><Glyph viewBox="0 0 14 14"><path d="M3.500 2.500h9v10h-9zM3 4h10"/><path d="M0 4l5 4-5 4z" fill="#303030" stroke="none"/></Glyph></ToolButton>
            </Group>
            <Group>
                <Combo $w={16} aria-label="종목 구분" defaultValue="주"><option>주</option></Combo>
                <ToolButton $w={14} aria-label="구분 선택"><Arrow/></ToolButton>
            </Group>
            <Group><ToolButton $first $w={17}>전</ToolButton></Group>
            <Group>
                <Field $w={53} aria-label="종목코드" defaultValue="134580"/>
                <ToolButton $w={13} aria-label="종목 목록"><Arrow/></ToolButton>
                <ToolButton $w={19} aria-label="종목 검색"><Glyph $smooth viewBox="0 0 14 14"><circle cx="6" cy="5" r="4"/><path d="M9 8l4 5" strokeWidth="2"/></Glyph></ToolButton>
                <ToolButton $w={19} aria-label="소리"><Glyph viewBox="0 0 14 14"><path d="M1 5h3l4-4v12L4 9H1z" fill="#606060" stroke="none"/><path d="M10.500 4v6M12.500 4v6" strokeDasharray="2 2"/></Glyph></ToolButton>
                <ToolButton $w={12} aria-label="소리 선택"><Arrow/></ToolButton>
            </Group>
            <Group>
                <Market>코</Market>
                <NameField $w={62} $c="#800040" aria-label="종목명" defaultValue="탑코미디어"/>
            </Group>
            <Group>{["일", "주", "월", "년"].map((t, i) => <ToolButton key={t} $first={i === 0}>{t}</ToolButton>)}</Group>
            <Group>{["분", "초", "틱"].map((t, i) => <ToolButton key={t} $first={i === 0} $on={t === "초"}>{t}</ToolButton>)}</Group>
            <Group>{["1", "3", "5", "10", "15", "30", "45", "60"].map((t, i) => <ToolButton key={t} $first={i === 0} $on={t === "5"}>{t}</ToolButton>)}</Group>
            <Group>
                <Field $w={22} $align="center" aria-label="주기" defaultValue="5"/>
                <ToolButton $w={14} aria-label="주기 선택"><Arrow/></ToolButton>
            </Group>
            <Group><Field $w={27} $align="right" aria-label="봉 개수" defaultValue="643"/></Group>
            <Total>/1800</Total>
            <Group>
                <ToolButton $first aria-label="봉 추가"><Glyph viewBox="0 0 14 14"><path d="M3 1v10M8 0v8"/><path d="M1 3h4v6H1zM6 2h4v4H6z" fill="#606060" stroke="none"/><path d="M11.500 8v6M9 11.500h5" strokeWidth="2"/></Glyph></ToolButton>
                <ToolButton aria-label="지표 추가"><Glyph viewBox="0 0 14 14"><path d="M0 6l4-4 4 4 5-5M0 3l5 4 4-5 4 4"/><path d="M10.500 8v6M8 11.500h5" strokeWidth="2"/></Glyph></ToolButton>
                <ToolButton aria-label="저장"><Glyph viewBox="0 0 14 14"><path d="M1.500 1.500h9l3 3v9h-12zM4.500 2v4h5V2M4.500 13V8.500h6V13"/></Glyph></ToolButton>
                <ToolButton aria-label="설정"><Glyph $smooth viewBox="0 0 14 14"><circle cx="7" cy="7" r="4" strokeWidth="2"/><circle cx="7" cy="7" r="6" strokeWidth="2" strokeDasharray="2.400 2.300"/></Glyph></ToolButton>
            </Group>
            <Check><input type="checkbox"/>D</Check>
        </Toolbar>

        <Toolbar $top={3}>
            <Quote>
                <QuoteCell $w={73} $c="#1446c8">2,175 ▼</QuoteCell>
                <QuoteCell $w={50} $c="#1446c8">65</QuoteCell>
                <QuoteCell $w={49} $pad={1} $line $c="#1446c8">-2.90%</QuoteCell>
                <QuoteCell $w={70}>530,298</QuoteCell>
                <QuoteCell $w={58} $c="#1446c8">9.27%</QuoteCell>
                <QuoteCell $w={43} $pad={2} $line>2.41%</QuoteCell>
                <QuoteCell $w={82} $pad={1} $line>1,160백만</QuoteCell>
                <QuoteCell $w={38}>최우선</QuoteCell>
                <QuoteCell $w={43} $c="#1446c8">2,175</QuoteCell>
                <QuoteCell $w={59} $pad={9} $line $c="#1446c8">2,170</QuoteCell>
                <QuoteCell $w={13}>시</QuoteCell>
                <QuoteCell $w={39} $c="#1446c8">2,180</QuoteCell>
                <QuoteCell $w={21}>고</QuoteCell>
                <QuoteCell $w={40} $c="#1446c8">2,215</QuoteCell>
                <QuoteCell $w={20}>저</QuoteCell>
                <QuoteCell $w={50} $pad={9} $c="#1446c8">2,115</QuoteCell>
            </Quote>
            <OrderButton $bg="#f5d2cd">매수</OrderButton>
            <OrderButton $bg="#c8dff5">매도</OrderButton>
        </Toolbar>

        <Panel>
            <Axis $side="right">
                {priceSteps.map(([label, size]) => <AxisStep key={label} $size={size}>{label}</AxisStep>)}
                <TableIcon aria-label="데이터 표"><Glyph $w={12} $h={12} viewBox="0 0 12 12"><path d="M1.500 1.500h9v9h-9zM2 3.500h8M2 6.500h8M4.500 2v8M7.500 2v8"/></Glyph></TableIcon>
                <PriceTag $y={280} $left={1} $w={38}><b>2,215</b>-1,12%</PriceTag>
                <PriceTag $now $y={567} $left={3} $w={35}><b>2,175</b>-2,90%</PriceTag>
            </Axis>
            <Plot>
                <PriceChart/>
                <Legend $x={59} $y={78} $c="#202020">탑코미디어 매물대 수(13)</Legend>
                <Note $x={71} $y={122} $c="#ff0000">최고 2,240 (-2,90%, 15:30)</Note>
                <Note $x={768} $y={989} $c="#0000ff">최저 2,115 (2,84%, 10:48)</Note>
                <Note $right $y={123} $c="#993300">전일종가 2,240 (0,00%)</Note>
                <Note $right $y={544} $c="#00dc00">당일시가 2,180 (-2,68%)</Note>
            </Plot>
            <Axis $side="left">
                <AxisStep $size={350}/>
                {rateSteps.map(label => <RateStep key={label} $size={1126}>{label}</RateStep>)}
                <RateStep $last $size={242}>30,00</RateStep>
                <RangeNote $c="#e61e0a" $top={2}>LC:2,84</RangeNote>
                <RangeNote $c="#1459c8" $top={14}>HC:-2,90</RangeNote>
                <PriceTag $y={280} $left={3} $w={42}><b>2,215</b>-1,12%</PriceTag>
                <PriceTag $now $y={567} $left={4} $w={41}><b>2,175</b>-2,90%</PriceTag>
            </Axis>
            <Corner $side="right"/>
            <TimeRow>
                {timeCells.map(([label, size], i) => <TimeCell key={i} $first={i === 0} $size={size}>{label}</TimeCell>)}
                <DateTag>2025/04/15(화) 14:15:55</DateTag>
            </TimeRow>
            <Corner $side="left">15:30:0</Corner>
        </Panel>

        <BottomBar>
            <ScrollButton aria-label="왼쪽으로"><Glyph $w={8} $h={10} viewBox="0 0 8 10"><path d="M6 1v8L2 5z" fill="#000000" stroke="none"/></Glyph></ScrollButton>
            <Track/>
            <ScrollButton aria-label="오른쪽으로"><Glyph $w={8} $h={10} viewBox="0 0 8 10"><path d="M2 1v8l4-4z" fill="#000000" stroke="none"/></Glyph></ScrollButton>
            <ScrollButton aria-label="되감기"><Glyph $w={12} $h={10} viewBox="0 0 12 10"><path d="M6 1v8L2 5zM11 1v8L7 5z" fill="#000000" stroke="none"/></Glyph></ScrollButton>
            <ScrollButton aria-label="정지"><Glyph $w={8} $h={10} viewBox="0 0 8 10"><path d="M1 2h6v6H1z" fill="#000000" stroke="none"/></Glyph></ScrollButton>
            <ScrollButton aria-label="빨리 감기"><Glyph $w={12} $h={10} viewBox="0 0 12 10"><path d="M1 1v8l4-4zM6 1v8l4-4z" fill="#000000" stroke="none"/></Glyph></ScrollButton>
            <Speed><input type="range" aria-label="재생 속도" defaultValue="38"/></Speed>
            {chartIcons.map(([name, icon]) => (
                <ChartTool key={name} $on={name === "십자선"} aria-label={name}><Glyph $smooth={name === "확대경"} viewBox="0 0 15 15">{icon}</Glyph></ChartTool>
            ))}
            <ChartTool><b>A</b></ChartTool>
        </BottomBar>
    </Window>
);

export default App;
